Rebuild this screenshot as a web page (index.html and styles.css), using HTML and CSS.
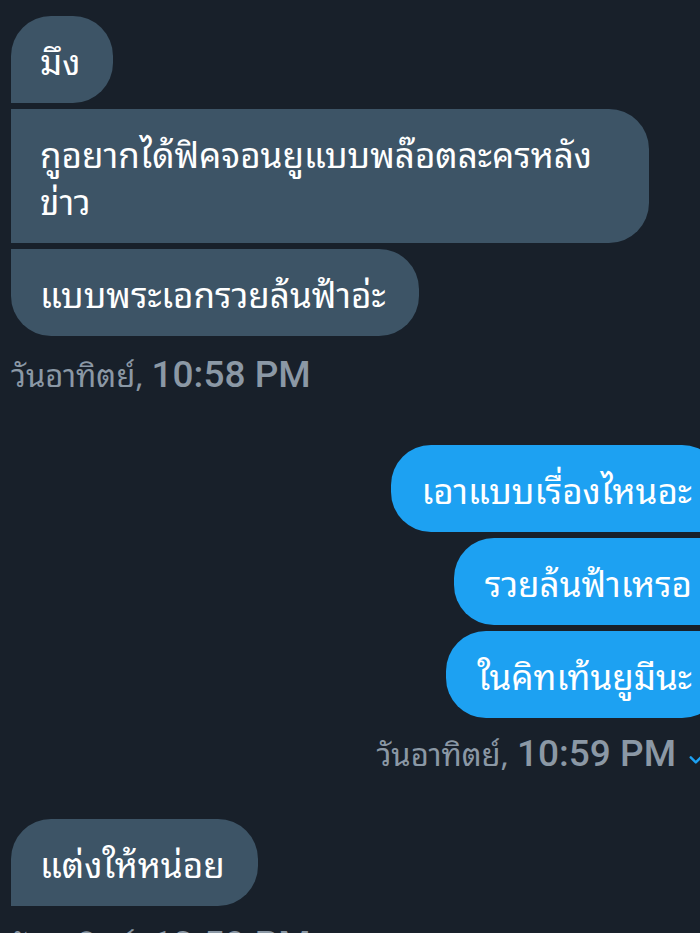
FILE: index.html
```html
<!DOCTYPE html>
<html lang="th">
<head>
<meta charset="utf-8">
<title>Messages</title>
<link rel="stylesheet" href="styles.css">
</head>
<body>
<main class="chat">
  <section class="group received">
    <div class="bubble first">มึง</div>
    <div class="bubble middle wide">กูอยากได้ฟิคจอนยูแบบพล๊อตละครหลัง<br>ข่าว</div>
    <div class="bubble last">แบบพระเอกรวยล้นฟ้าอ่ะ</div>
    <div class="meta"><span class="stamp">วันอาทิตย์, <span class="time">10:58 PM</span></span></div>
  </section>

  <section class="group sent">
    <div class="bubble first">เอาแบบเรื่องไหนอะ</div>
    <div class="bubble middle">รวยล้นฟ้าเหรอ</div>
    <div class="bubble last">ในคิทเท้นยูมีนะ</div>
    <div class="meta">
      <span class="stamp">วันอาทิตย์, <span class="time">10:59 PM</span></span>
      <svg class="check" viewBox="0 0 24 24" width="22" height="22" aria-hidden="true">
        <path d="M3 13.5l5.5 5.5L21 6.5" fill="none" stroke="#1da1f2" stroke-width="2.6" stroke-linecap="round" stroke-linejoin="round"/>
      </svg>
    </div>
  </section>

  <section class="group received">
    <div class="bubble single">แต่งให้หน่อย</div>
    <div class="meta"><span class="stamp">วันอาทิตย์, <span class="time">10:59 PM</span></span></div>
  </section>
</main>
</body>
</html>
```

FILE: styles.css
```css
html, body {
  margin: 0;
  padding: 0;
  background: #18202a;
  overflow: hidden;
}

body {
  width: 700px;
  height: 933px;
  font-family: "Noto Sans Thai Looped", "Noto Sans Thai", Roboto, "Noto Sans", sans-serif;
}

.chat {
  width: 711px;
  padding: 16px 0 0 11px;
  display: flex;
  flex-direction: column;
}

.group {
  display: flex;
  flex-direction: column;
  gap: 6px;
}

.group.received {
  align-items: flex-start;
}

.group.sent {
  align-items: flex-end;
}

.group.received + .group.sent {
  margin-top: 50px;
}

.group.sent + .group.received {
  margin-top: 45px;
}

.bubble {
  box-sizing: border-box;
  color: #ffffff;
  font-size: 35px;
  line-height: 47px;
  padding: 20px 33px 20px 29px;
  border-radius: 40px;
  white-space: nowrap;
}

.bubble.wide {
  width: 638px;
}

.received .bubble {
  background: #3d5466;
}

.received .bubble.first,
.received .bubble.single {
  border-bottom-left-radius: 0;
}

.received .bubble.middle {
  border-top-left-radius: 0;
  border-bottom-left-radius: 0;
}

.received .bubble.last {
  border-top-left-radius: 0;
}

.sent .bubble {
  background: #1da1f2;
  padding-left: 31px;
  padding-right: 30px;
}

.sent .bubble.first {
  border-bottom-right-radius: 0;
}

.sent .bubble.middle {
  border-top-right-radius: 0;
  border-bottom-right-radius: 0;
}

.sent .bubble.last {
  border-top-right-radius: 0;
}

.meta {
  margin-top: 11px;
  color: #8b98a5;
  font-size: 31px;
  line-height: 40px;
  display: flex;
  align-items: center;
  gap: 12px;
  white-space: nowrap;
}

.time {
  font-family: Roboto, "Noto Sans", sans-serif;
  font-weight: 500;
  font-size: 37px;
}

.sent .meta {
  margin-top: 8px;
  padding-right: 12px;
}

.check {
  flex: none;
  margin-top: 6px;
}
```
